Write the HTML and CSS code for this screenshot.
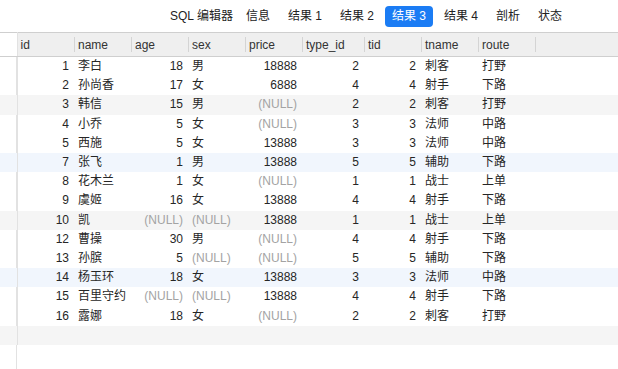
FILE: index.html
```html
<!DOCTYPE html>
<html lang="zh">
<head>
    <meta charset="UTF-8">
    <meta name="viewport" content="width=device-width, initial-scale=1.0">
    <title>结果 3</title>
    <link rel="stylesheet" href="styles.css">
</head>
<body>
    <div class="tabs">
        <span class="tab">SQL 编辑器</span>
        <span class="tab">信息</span>
        <span class="tab">结果 1</span>
        <span class="tab">结果 2</span>
        <span class="tab active">结果 3</span>
        <span class="tab">结果 4</span>
        <span class="tab">剖析</span>
        <span class="tab">状态</span>
    </div>

    <div class="grid">
        <table>
            <colgroup>
                <col class="c-gut">
                <col class="c-id">
                <col class="c-std">
                <col class="c-std">
                <col class="c-std">
                <col class="c-std">
                <col class="c-wide">
                <col class="c-std">
                <col class="c-std">
                <col class="c-std">
                <col>
            </colgroup>
            <thead>
                <tr>
                    <th class="gut"></th>
                    <th>id</th>
                    <th>name</th>
                    <th>age</th>
                    <th>sex</th>
                    <th>price</th>
                    <th>type_id</th>
                    <th>tid</th>
                    <th>tname</th>
                    <th>route</th>
                    <th class="fill"></th>
                </tr>
            </thead>
            <tbody>
                <tr><td class="gut"></td><td class="num">1</td><td>李白</td><td class="num">18</td><td>男</td><td class="num">18888</td><td class="num">2</td><td class="num">2</td><td>刺客</td><td>打野</td><td></td></tr>
                <tr><td class="gut"></td><td class="num">2</td><td>孙尚香</td><td class="num">17</td><td>女</td><td class="num">6888</td><td class="num">4</td><td class="num">4</td><td>射手</td><td>下路</td><td></td></tr>
                <tr class="grey"><td class="gut"></td><td class="num">3</td><td>韩信</td><td class="num">15</td><td>男</td><td class="num null">(NULL)</td><td class="num">2</td><td class="num">2</td><td>刺客</td><td>打野</td><td></td></tr>
                <tr><td class="gut"></td><td class="num">4</td><td>小乔</td><td class="num">5</td><td>女</td><td class="num null">(NULL)</td><td class="num">3</td><td class="num">3</td><td>法师</td><td>中路</td><td></td></tr>
                <tr><td class="gut"></td><td class="num">5</td><td>西施</td><td class="num">5</td><td>女</td><td class="num">13888</td><td class="num">3</td><td class="num">3</td><td>法师</td><td>中路</td><td></td></tr>
                <tr class="blue"><td class="gut"></td><td class="num">7</td><td>张飞</td><td class="num">1</td><td>男</td><td class="num">13888</td><td class="num">5</td><td class="num">5</td><td>辅助</td><td>下路</td><td></td></tr>
                <tr><td class="gut"></td><td class="num">8</td><td>花木兰</td><td class="num">1</td><td>女</td><td class="num null">(NULL)</td><td class="num">1</td><td class="num">1</td><td>战士</td><td>上单</td><td></td></tr>
                <tr><td class="gut"></td><td class="num">9</td><td>虞姬</td><td class="num">16</td><td>女</td><td class="num">13888</td><td class="num">4</td><td class="num">4</td><td>射手</td><td>下路</td><td></td></tr>
                <tr class="grey"><td class="gut"></td><td class="num">10</td><td>凯</td><td class="num null">(NULL)</td><td class="null">(NULL)</td><td class="num">13888</td><td class="num">1</td><td class="num">1</td><td>战士</td><td>上单</td><td></td></tr>
                <tr><td class="gut"></td><td class="num">12</td><td>曹操</td><td class="num">30</td><td>男</td><td class="num null">(NULL)</td><td class="num">4</td><td class="num">4</td><td>射手</td><td>下路</td><td></td></tr>
                <tr><td class="gut"></td><td class="num">13</td><td>孙膑</td><td class="num">5</td><td class="null">(NULL)</td><td class="num null">(NULL)</td><td class="num">5</td><td class="num">5</td><td>辅助</td><td>下路</td><td></td></tr>
                <tr class="blue"><td class="gut"></td><td class="num">14</td><td>杨玉环</td><td class="num">18</td><td>女</td><td class="num">13888</td><td class="num">3</td><td class="num">3</td><td>法师</td><td>中路</td><td></td></tr>
                <tr><td class="gut"></td><td class="num">15</td><td>百里守约</td><td class="num null">(NULL)</td><td class="null">(NULL)</td><td class="num">13888</td><td class="num">4</td><td class="num">4</td><td>射手</td><td>下路</td><td></td></tr>
                <tr><td class="gut"></td><td class="num">16</td><td>露娜</td><td class="num">18</td><td>女</td><td class="num null">(NULL)</td><td class="num">2</td><td class="num">2</td><td>刺客</td><td>打野</td><td></td></tr>
                <!-- 空白的新增列 -->
                <tr class="grey"><td class="gut"></td><td></td><td></td><td></td><td></td><td></td><td></td><td></td><td></td><td></td><td></td></tr>
            </tbody>
        </table>
    </div>
</body>
</html>
```

FILE: styles.css
```css
html,body{
    margin:0;
    height:100%;
}
body{
    display:flex;
    flex-direction:column;
    background:#fff;
    color:#262626;
    font-family:"Liberation Sans","Noto Sans CJK SC",sans-serif;
    font-size:12px;
}
.tabs{
    height:32px;
    display:flex;
    align-items:center;
    gap:4px;
    padding-left:163px;
    box-sizing:border-box;
}
.tab{
    height:21px;
    line-height:21px;
    padding:0 7px;
    border-radius:4px;
    color:#222;
    white-space:nowrap;
}
.tab:first-child{
    padding-right:2px;
}
.tab.active{
    background:#1b7cf4;
    color:#fff;
}
.grid{
    flex:1;
    /* 左側那條線要一直拉到底 */
    background:linear-gradient(#e2e2e2,#e2e2e2) 16px 0/1px 100% no-repeat;
}
table{
    width:100%;
    table-layout:fixed;
    border-collapse:collapse;
}
.c-gut{width:17px;}
.c-id{width:58px;}
.c-std{width:57px;}
.c-wide{width:62px;}
th{
    height:23px;
    padding:0 3px;
    text-align:left;
    font-weight:normal;
    color:#333;
    white-space:nowrap;
    border-top:1px solid #cfcfcf;
    border-bottom:1px solid #cfcfcf;
    background:linear-gradient(#d4d4d4,#d4d4d4) right 4px/1px 15px no-repeat,#efefef;
}
th.fill{
    background:#efefef;
}
th.gut{
    background:#fff;
    border-right:1px solid #e2e2e2;
}
td{
    height:19.2px;
    line-height:19px;
    padding:0 3px;
    white-space:nowrap;
    overflow:hidden;
}
td.gut{
    padding:0;
    border-right:1px solid #e2e2e2;
}
.num{
    text-align:right;
    padding-right:6px;
}
.null{
    color:#a3a3a3;
}
tr.grey td{
    background:#f5f5f5;
}
tr.blue td{
    background:#f1f6fd;
}
```
